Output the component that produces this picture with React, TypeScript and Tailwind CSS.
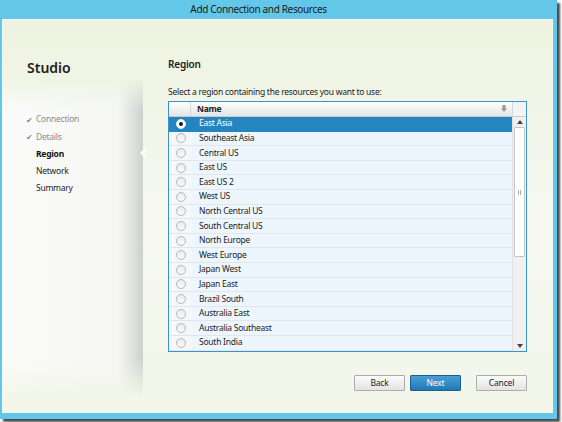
import { useState } from "react";

const REGIONS = [
  "East Asia",
  "Southeast Asia",
  "Central US",
  "East US",
  "East US 2",
  "West US",
  "North Central US",
  "South Central US",
  "North Europe",
  "West Europe",
  "Japan West",
  "Japan East",
  "Brazil South",
  "Australia East",
  "Australia Southeast",
  "South India",
];

const STEPS = [
  { label: "Connection", done: true },
  { label: "Details", done: true },
  { label: "Region", active: true },
  { label: "Network" },
  { label: "Summary" },
];

const FONT = "font-['Noto_Sans','Open_Sans',sans-serif]";
const SMALL = "text-[8.5px] tracking-[-0.25px]";

function Radio({ checked }: { checked: boolean }) {
  return (
    <span
      className={
        "flex h-[10px] w-[10px] items-center justify-center rounded-full border " +
        (checked
          ? "border-[#e8eef3] bg-white"
          : "border-[#b4b8bc] bg-gradient-to-b from-[#e9eaeb] to-[#fbfbfb]")
      }
    >
      {checked ? <span className="h-[4px] w-[4px] rounded-full bg-[#1b1b1b]" /> : null}
    </span>
  );
}

function Button({ label, primary }: { label: string; primary?: boolean }) {
  return (
    <button
      type="button"
      className={
        "flex h-[16px] w-[51px] items-center justify-center rounded-[1px] border text-[8.5px] leading-none tracking-[-0.2px] " +
        (primary
          ? "border-[#1d5f8f] bg-gradient-to-b from-[#4a9fd6] to-[#1f78b6] text-white"
          : "border-[#acacac] bg-gradient-to-b from-[#fbfbfb] to-[#e3e3e3] text-[#222]")
      }
    >
      {label}
    </button>
  );
}

export default function App() {
  const [selected, setSelected] = useState(0);

  return (
    <div className={`h-[422px] w-[562px] overflow-hidden bg-white ${FONT}`}>
      <div className="flex h-[419px] w-[557px] flex-col bg-[#63c7ea] shadow-[3px_3px_2px_rgba(0,0,0,0.7)]">
        {/* title bar */}
        <div className="flex h-[19px] items-center justify-center pr-[40px] text-[10px] tracking-[-0.35px] text-[#1a1a1a]">
          Add Connection and Resources
        </div>

        {/* client area */}
        <div className="mb-[6px] ml-[2px] mr-[4px] flex flex-1 border border-[#f4f8ee] bg-gradient-to-b from-[#edf3e0] via-[#f6f8f0] to-[#f3f6e9]">
          {/* sidebar */}
          <aside className="flex w-[140px] flex-col pb-[14px]">
            <div className="ml-[24px] mt-[39px] text-[14px] font-semibold leading-[18px] text-[#222]">
              Studio
            </div>
            <div className="flex flex-1 flex-col bg-gradient-to-r from-[#fbfcf9] via-[#f6f7f4] via-[82%] to-[#cdd1ce]">
              <div className="h-[34px] bg-gradient-to-b from-[#eff4e4] to-transparent" />
              <nav className="flex flex-col">
                {STEPS.map((s) => (
                  <div key={s.label} className="flex h-[17.3px] items-center">
                    <span className="flex w-[33px] justify-start pl-[23px] text-[8px] text-[#8a8a8a]">
                      {s.done ? "✔" : ""}
                    </span>
                    <span
                      className={
                        SMALL +
                        " " +
                        (s.active
                          ? "font-bold text-[#111]"
                          : s.done
                            ? "text-[#8a8a8a]"
                            : "text-[#222]")
                      }
                    >
                      {s.label}
                    </span>
                  </div>
                ))}
              </nav>
              <div className="flex-1" />
              <div className="h-[40px] bg-gradient-to-t from-[#f3f6e9] to-transparent" />
            </div>
          </aside>

          {/* main panel */}
          <main className="relative flex flex-1 flex-col pl-[25px] pr-[25px]">
            {/* step pointer */}
            <span className="absolute left-[-3px] top-[128px] h-0 w-0 border-y-[5px] border-r-[5px] border-y-transparent border-r-white" />

            <div className="mt-[38px] text-[10px] font-semibold leading-[12px] tracking-[-0.2px] text-[#222]">
              Region
            </div>
            <div className={`mt-[16px] leading-[12px] text-[#222] ${SMALL}`}>
              Select a region containing the resources you want to use:
            </div>

            {/* list */}
            <div className="mt-[3px] flex h-[251px] flex-col border border-[#3a93cc] bg-[#eef6fd]">
              <div className="flex h-[15px] border-b border-[#c9ccce] bg-gradient-to-b from-white to-[#e4e5e6]">
                <div className="w-[22px] border-r border-[#d4d6d8]" />
                <div className={`flex flex-1 items-center justify-between pl-[6px] pr-[5px] font-bold text-[#222] ${SMALL}`}>
                  <span>Name</span>
                  <svg width="6" height="8" viewBox="0 0 6 8" className="text-[#9a9a9a]">
                    <path d="M1.5 0h3v3.5H6L3 7 0 3.5h1.5z" fill="currentColor" />
                  </svg>
                </div>
                <div className="w-[14px] border-l border-[#d4d6d8] bg-[#f3f3f3]" />
              </div>

              <div className="flex flex-1 overflow-hidden">
                <div className="flex flex-1 flex-col">
                  {REGIONS.map((r, i) => {
                    const on = i === selected;
                    return (
                      <div
                        key={r}
                        onClick={() => setSelected(i)}
                        className={
                          "flex h-[14.6px] items-center border-b " +
                          SMALL +
                          " " +
                          (on
                            ? "border-[#2585c0] bg-[#2585c0] text-white"
                            : "border-[#e2e6ea] text-[#222]")
                        }
                      >
                        <div
                          className={
                            "flex h-full w-[23px] items-center justify-center " +
                            (on ? "" : "bg-[#f4f6f8]")
                          }
                        >
                          <Radio checked={on} />
                        </div>
                        <span className="pl-[7px]">{r}</span>
                      </div>
                    );
                  })}
                </div>

                {/* scrollbar */}
                <div className="flex w-[14px] flex-col items-center border-l border-[#e0e0e0] bg-[#f0f0f0]">
                  <div className="flex h-[10px] items-center">
                    <svg width="6" height="4" viewBox="0 0 6 4">
                      <path d="M0 4L3 0l3 4z" fill="#444" />
                    </svg>
                  </div>
                  <div className="flex h-[130px] w-[11px] items-center justify-center rounded-[1px] border border-[#c4c4c4] bg-white">
                    <span className="h-[5px] w-[3px] border-x border-[#b0b0b0]" />
                  </div>
                  <div className="flex-1" />
                  <div className="flex h-[10px] items-center">
                    <svg width="6" height="4" viewBox="0 0 6 4">
                      <path d="M0 0l3 4 3-4z" fill="#444" />
                    </svg>
                  </div>
                </div>
              </div>
            </div>

            <div className="mt-[23px] flex justify-end">
              <div className="flex gap-[5px]">
                <Button label="Back" />
                <Button label="Next" primary />
              </div>
              <div className="ml-[15px]">
                <Button label="Cancel" />
              </div>
            </div>
          </main>
        </div>
      </div>
    </div>
  );
}
